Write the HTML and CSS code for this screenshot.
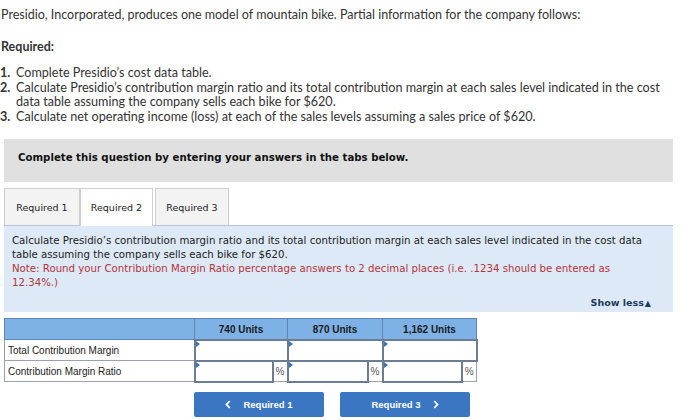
FILE: index.html
```html
<!DOCTYPE html>
<html>
<head>
<meta charset="utf-8">
<link rel="stylesheet" href="styles.css">
</head>
<body>
<div class="page">
  <p class="intro">Presidio, Incorporated, produces one model of mountain bike. Partial information for the company follows:</p>
  <p class="req">Required:</p>
  <ol class="list">
    <li><span class="num">1.</span><span>Complete Presidio’s cost data table.</span></li>
    <li><span class="num">2.</span><span>Calculate Presidio’s contribution margin ratio and its total contribution margin at each sales level indicated in the cost data table assuming the company sells each bike for $620.</span></li>
    <li><span class="num">3.</span><span>Calculate net operating income (loss) at each of the sales levels assuming a sales price of $620.</span></li>
  </ol>
  <div class="main">
    <div class="banner">Complete this question by entering your answers in the tabs below.</div>
    <div class="tabs">
      <div class="tab">Required 1</div>
      <div class="tab active">Required 2</div>
      <div class="tab">Required 3</div>
    </div>
    <div class="panel">
      <p class="ptext">Calculate Presidio’s contribution margin ratio and its total contribution margin at each sales level indicated in the cost data table assuming the company sells each bike for $620.<br><span class="note">Note: Round your Contribution Margin Ratio percentage answers to 2 decimal places (i.e. .1234 should be entered as 12.34%.)</span></p>
      <div class="showless">Show less<span class="tri">▲</span></div>
    </div>
    <table class="grid">
      <colgroup>
        <col class="c-label"><col class="c-in1"><col class="c-pct"><col class="c-in2"><col class="c-pct"><col class="c-in3"><col class="c-pct">
      </colgroup>
      <tr class="head">
        <th></th>
        <th colspan="2">740 Units</th>
        <th colspan="2">870 Units</th>
        <th colspan="2">1,162 Units</th>
      </tr>
      <tr>
        <td class="label">Total Contribution Margin</td>
        <td class="in" colspan="2"><span class="mark"></span></td>
        <td class="in" colspan="2"><span class="mark"></span></td>
        <td class="in" colspan="2"><span class="mark"></span></td>
      </tr>
      <tr>
        <td class="label">Contribution Margin Ratio</td>
        <td class="in"><span class="mark"></span></td>
        <td class="pct">%</td>
        <td class="in"><span class="mark"></span></td>
        <td class="pct">%</td>
        <td class="in"><span class="mark"></span></td>
        <td class="pct">%</td>
      </tr>
    </table>
    <div class="nav">
      <div class="btn"><svg class="chev left" width="6" height="9" viewBox="0 0 6 9"><polyline points="4.8,1 1.5,4.5 4.8,8" fill="none" stroke="#fff" stroke-width="1.8"/></svg>Required 1</div>
      <div class="btn">Required 3<svg class="chev right" width="6" height="9" viewBox="0 0 6 9"><polyline points="1.2,1 4.5,4.5 1.2,8" fill="none" stroke="#fff" stroke-width="1.8"/></svg></div>
    </div>
  </div>
</div>
</body>
</html>
```
FILE: styles.css
```css
* { box-sizing: border-box; }
html, body { margin: 0; padding: 0; background: #fff; }
.page {
  width: 700px;
  height: 420px;
  overflow: hidden;
  font-family: Lato, "Liberation Sans", sans-serif;
  color: #333;
}
.intro {
  margin: 0;
  padding: 7px 0 0 1px;
  font-size: 12.5px;
  line-height: 16px;
}
.req {
  margin: 16px 0 0 1px;
  font-size: 12.5px;
  font-weight: bold;
  line-height: 16px;
}
.list {
  list-style: none;
  margin: 11px 0 0 0;
  padding: 0;
  font-size: 12.6px;
  line-height: 14.6px;
}
.list li {
  display: grid;
  grid-template-columns: 16px 1fr;
  padding-right: 28px;
}
.list .num { font-weight: bold; }
.main {
  margin: 15px 0 0 4px;
  width: 669px;
}
.banner {
  height: 43px;
  background: #e0e0e0;
  font-family: "DejaVu Sans", Verdana, sans-serif;
  font-weight: bold;
  font-size: 10.2px;
  color: #111;
  padding: 12px 0 0 14px;
  line-height: 14px;
}
.tabs {
  display: flex;
  margin-top: 6px;
  height: 37px;
  align-items: flex-end;
}
.tab {
  height: 37px;
  width: 74px;
  border: 1px solid #cfcfcf;
  border-bottom: none;
  background: #f3f3f3;
  font-family: "DejaVu Sans", Verdana, sans-serif;
  font-size: 9.5px;
  color: #222;
  display: flex;
  align-items: center;
  justify-content: center;
  margin-right: 2px;
}
.tab:first-child { width: 76px; margin-right: 0; }
.tab.active {
  background: #fff;
  width: 73px;
  height: 38px;
  position: relative;
  z-index: 1;
  margin-bottom: -1px;
}
.panel {
  background: #dde9f6;
  border-top: 1px solid #b5c5d4;
  height: 87px;
  padding: 8px 20px 0 8px;
  font-family: "DejaVu Sans", Verdana, sans-serif;
  font-size: 10.2px;
  line-height: 14px;
  color: #222;
}
.ptext { margin: 0; }
.note { color: #b3363a; }
.showless {
  text-align: right;
  font-weight: bold;
  color: #1d3a5f;
  font-size: 9.5px;
  margin-top: 6px;
  padding-right: 2px;
}
.tri { font-size: 8px; margin-left: 1px; }
.grid {
  margin-top: 6px;
  border-collapse: collapse;
  table-layout: fixed;
  width: 472px;
  font-family: "Liberation Sans", Arial, sans-serif;
  font-size: 10px;
}
.c-label { width: 190px; }
.c-in1 { width: 78px; }
.c-in2 { width: 80px; }
.c-in3 { width: 79px; }
.c-pct { width: 15px; }
.grid tr { height: 21px; }
.head th {
  background: #7eb1e6;
  border: 1px solid #5a86b8;
  color: #1a1a1a;
  font-weight: bold;
  height: 21px;
  padding: 0;
}
.grid td {
  border: 1px solid #9aa3ad;
  height: 20px;
  padding: 0;
}
.label { padding-left: 3px !important; color: #222; }
.in {
  position: relative;
  border: 2px solid #6b7d93 !important;
  background: #fff;
}
.mark {
  position: absolute;
  left: 0;
  top: 0;
  width: 0;
  height: 0;
  border-top: 3px solid transparent;
  border-bottom: 3px solid transparent;
  border-left: 4px solid #3d6fb3;
}
.pct {
  text-align: center;
  color: #555;
  font-size: 10px;
}
.nav {
  display: flex;
  gap: 16px;
  margin: 9px 0 0 190px;
}
.btn {
  width: 130px;
  height: 25px;
  background: #3a76c1;
  border-radius: 2px;
  color: #fff;
  font-family: "Liberation Sans", Arial, sans-serif;
  font-weight: bold;
  font-size: 9.5px;
  display: flex;
  align-items: center;
  justify-content: center;
}
.chev { display: block; }
.chev.left { margin-right: 12px; }
.chev.right { margin-left: 12px; }
```
